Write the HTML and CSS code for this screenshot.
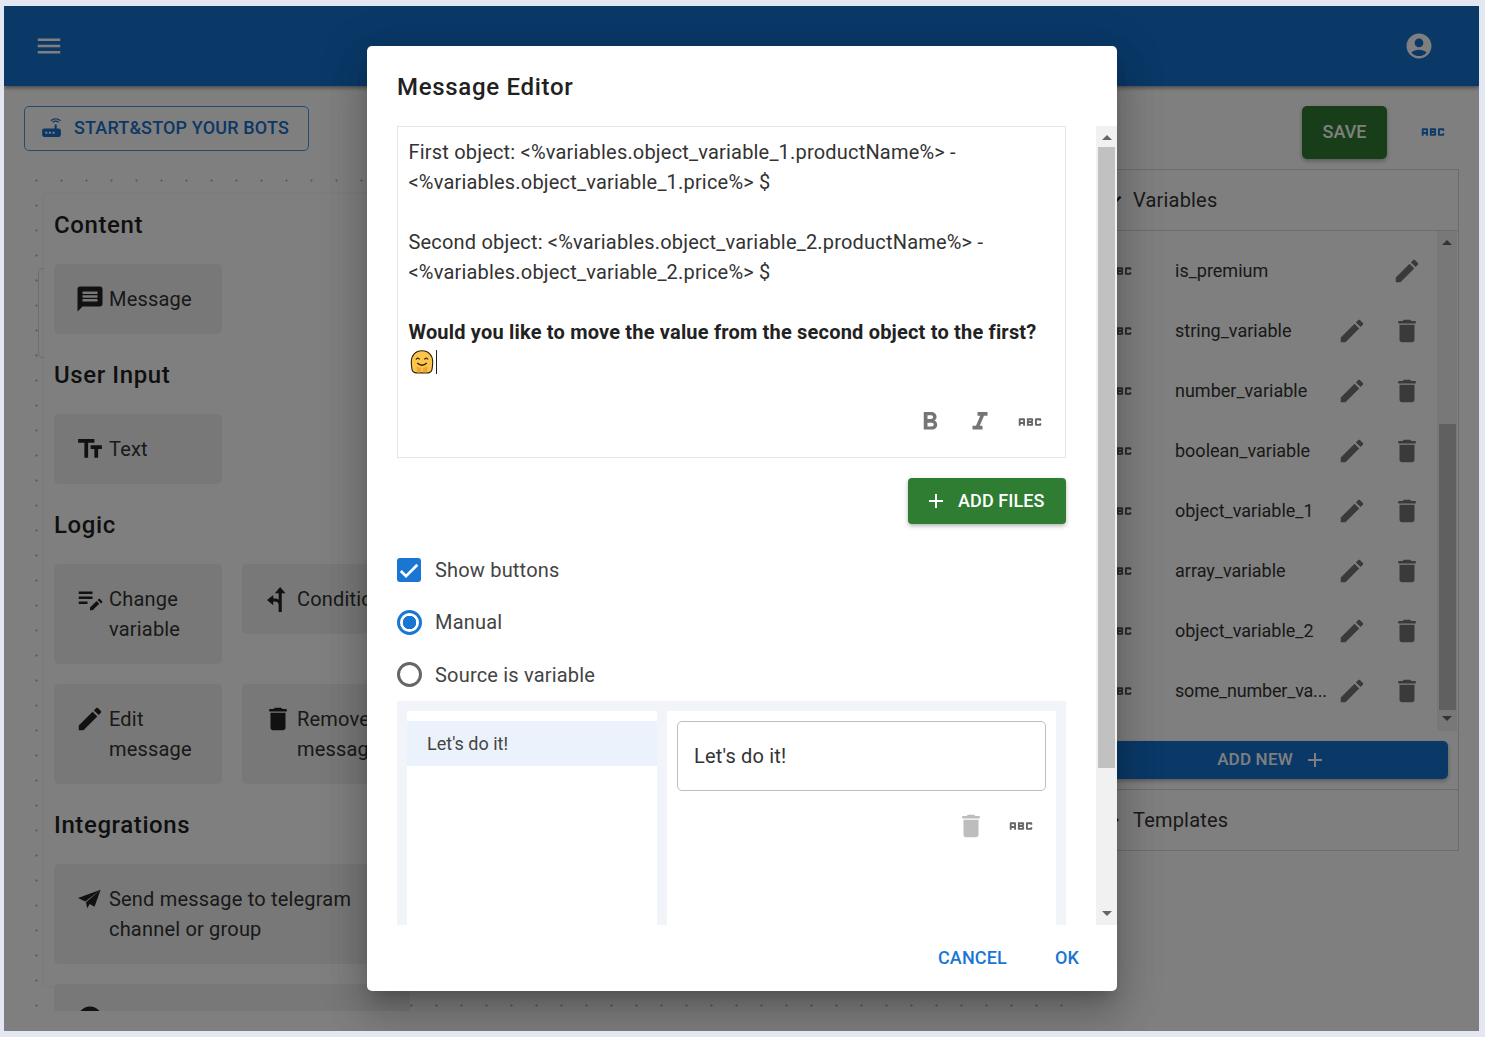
FILE: index.html
```html
<!DOCTYPE html>
<html lang="en">
<head>
    <meta charset="UTF-8">
    <meta name="viewport" content="width=device-width, initial-scale=1.0">
    <title>Message Editor</title>
    <link rel="stylesheet" href="styles.css">
</head>
<body>
    <svg class="sprite" xmlns="http://www.w3.org/2000/svg">
        <symbol id="i-menu" viewBox="0 0 24 24"><path d="M3 18h18v-2H3v2zm0-5h18v-2H3v2zm0-7v2h18V6H3z"/></symbol>
        <symbol id="i-account" viewBox="0 0 24 24"><path d="M12 2C6.48 2 2 6.48 2 12s4.48 10 10 10 10-4.48 10-10S17.52 2 12 2zm0 4c1.93 0 3.5 1.57 3.5 3.5S13.93 13 12 13s-3.5-1.57-3.5-3.5S10.07 6 12 6zm0 14c-2.03 0-4.43-.82-6.14-2.88C7.55 15.8 9.68 15 12 15s4.45.8 6.14 2.12C16.43 19.18 14.03 20 12 20z"/></symbol>
        <symbol id="i-router" viewBox="0 0 24 24"><path d="M20.2 5.9l.8-.8C19.6 3.7 17.8 3 16 3s-3.6.7-5 2.1l.8.8C13 4.8 14.5 4.2 16 4.2s3 .6 4.2 1.7zm-.9.8c-.9-.9-2.1-1.4-3.3-1.4s-2.4.5-3.3 1.4l.8.8c.7-.7 1.6-1 2.5-1 .9 0 1.8.3 2.5 1l.8-.8zM19 13h-2V9h-2v4H5c-1.1 0-2 .9-2 2v4c0 1.1.9 2 2 2h14c1.1 0 2-.9 2-2v-4c0-1.1-.9-2-2-2zM8 18H6v-2h2v2zm3.5 0h-2v-2h2v2zm3.5 0h-2v-2h2v2z"/></symbol>
        <symbol id="i-message" viewBox="0 0 24 24"><path d="M20 2H4c-1.1 0-1.99.9-1.99 2L2 22l4-4h14c1.1 0 2-.9 2-2V4c0-1.1-.9-2-2-2zm-2 12H6v-2h12v2zm0-3H6V9h12v2zm0-3H6V6h12v2z"/></symbol>
        <symbol id="i-text" viewBox="0 0 24 24"><path d="M2.5 4v3h5v12h3V7h5V4h-13zm19 5h-9v3h3v7h3v-7h3V9h-3z"/></symbol>
        <symbol id="i-edit-note" viewBox="0 0 24 24"><path d="M3 10h11v2H3v-2zm0-2h11V6H3v2zm0 8h7v-2H3v2zm15.01-3.13l.71-.71c.39-.39 1.02-.39 1.41 0l1.41 1.41c.39.39.39 1.02 0 1.41l-.71.71-2.82-2.82zm-.71.71l-5.3 5.3V21h2.12l5.3-5.3-2.12-2.12z"/></symbol>
        <symbol id="i-fork" viewBox="0 0 24 24"><path d="M13.7 2.400L18 7.400h-3v15h-2.500V17c0-2-1-3-3-3H8.200v3l-5-4.200 5-4v2.800h1.300c1.200 0 2.200.4 3 1V7.400h-3z"/></symbol>
        <symbol id="i-edit" viewBox="0 0 24 24"><path d="M3 17.25V21h3.75L17.81 9.94l-3.75-3.75L3 17.25zM20.71 7.04c.39-.39.39-1.02 0-1.41l-2.34-2.34c-.39-.39-1.02-.39-1.41 0l-1.83 1.83 3.75 3.75 1.83-1.83z"/></symbol>
        <symbol id="i-delete" viewBox="0 0 24 24"><path d="M6 19c0 1.1.9 2 2 2h8c1.1 0 2-.9 2-2V7H6v12zM19 4h-3.5l-1-1h-5l-1 1H5v2h14V4z"/></symbol>
        <symbol id="i-send" viewBox="0 0 24 24"><path d="M20.500 4.500L2.400 11.200l5.800 2.800zM20.500 4.500L8.800 14.500l.9 4.900 2.100-3.500 3.800 2.200z"/></symbol>
        <symbol id="i-add" viewBox="0 0 24 24"><path d="M19 13h-6v6h-2v-6H5v-2h6V5h2v6h6v2z"/></symbol>
        <symbol id="i-bold" viewBox="0 0 24 24"><path d="M15.6 10.79c.97-.67 1.65-1.77 1.65-2.79 0-2.26-1.75-4-4-4H7v14h7.04c2.09 0 3.71-1.7 3.71-3.79 0-1.52-.86-2.82-2.15-3.42zM10 6.5h3c.83 0 1.5.67 1.5 1.5s-.67 1.5-1.5 1.5h-3v-3zm3.5 9H10v-3h3.5c.83 0 1.5.67 1.5 1.5s-.67 1.5-1.5 1.5z"/></symbol>
        <symbol id="i-italic" viewBox="0 0 24 24"><path d="M10 4v3h2.21l-3.42 8H6v3h8v-3h-2.21l3.42-8H18V4z"/></symbol>
        <symbol id="i-abc" viewBox="0 0 24 24"><path d="M21 11h-1.5v-.5h-2v3h2V13H21v1c0 .55-.45 1-1 1h-3c-.55 0-1-.45-1-1v-4c0-.55.45-1 1-1h3c.55 0 1 .45 1 1v1zM8 10v5H6.5v-1.5h-2V15H3v-5c0-.55.45-1 1-1h3c.55 0 1 .45 1 1zm-1.5.5h-2V12h2v-1.5zm7 1.5c.55 0 1 .45 1 1v1c0 .55-.45 1-1 1h-4V9h4c.55 0 1 .45 1 1v1c0 .55-.45 1-1 1zM11 10.5v.75h2v-.75h-2zm2 2.25h-2v.75h2v-.75z"/></symbol>
        <symbol id="i-chevron" viewBox="0 0 24 24"><path d="M16.59 8.59L12 13.17 7.41 8.59 6 10l6 6 6-6z"/></symbol>
    </svg>

    <div class="app">
        <header class="topbar">
            <svg class="icon"><use href="#i-menu"/></svg>
            <svg class="icon"><use href="#i-account"/></svg>
        </header>

        <main class="main">
            <section class="builder">
                <button class="bots-button" type="button">
                    <svg class="icon"><use href="#i-router"/></svg>
                    <span>START&amp;STOP YOUR BOTS</span>
                </button>
                <div class="canvas">
                    <div class="canvas-node"></div>
                    <div class="palette">
                        <h3 class="palette-title">Content</h3>
                        <div class="palette-cards">
                            <div class="block-card"><svg class="icon"><use href="#i-message"/></svg><span>Message</span></div>
                        </div>
                        <h3 class="palette-title">User Input</h3>
                        <div class="palette-cards">
                            <div class="block-card"><svg class="icon"><use href="#i-text"/></svg><span>Text</span></div>
                        </div>
                        <h3 class="palette-title">Logic</h3>
                        <div class="palette-cards">
                            <div class="block-card"><svg class="icon"><use href="#i-edit-note"/></svg><span>Change<br>variable</span></div>
                            <div class="block-card block-short"><svg class="icon"><use href="#i-fork"/></svg><span>Condition</span></div>
                            <div class="block-card"><svg class="icon"><use href="#i-edit"/></svg><span>Edit<br>message</span></div>
                            <div class="block-card"><svg class="icon"><use href="#i-delete"/></svg><span>Remove<br>message</span></div>
                        </div>
                        <h3 class="palette-title">Integrations</h3>
                        <div class="palette-cards">
                            <div class="block-card block-wide"><svg class="icon"><use href="#i-send"/></svg><span>Send message to telegram<br>channel or group</span></div>
                            <div class="block-card block-wide"><svg class="icon"><use href="#i-account"/></svg></div>
                        </div>
                    </div>
                </div>
            </section>

            <aside class="sidebar">
                <div class="save-row">
                    <button class="save-button" type="button">SAVE</button>
                    <svg class="icon save-abc"><use href="#i-abc"/></svg>
                </div>
                <div class="accordion">
                    <div class="accordion-head">
                        <svg class="icon"><use href="#i-chevron"/></svg>
                        <span>Variables</span>
                    </div>
                    <div class="accordion-body">
                        <div class="variables">
                            <div class="variable-list">
                                <div class="variable-row">
                                    <svg class="icon row-abc"><use href="#i-abc"/></svg>
                                    <span class="variable-name">is_premium</span>
                                    <span class="row-action"></span>
                                    <span class="row-action"><svg class="icon"><use href="#i-edit"/></svg></span>
                                </div>
                                <div class="variable-row">
                                    <svg class="icon row-abc"><use href="#i-abc"/></svg>
                                    <span class="variable-name">string_variable</span>
                                    <span class="row-action"><svg class="icon"><use href="#i-edit"/></svg></span>
                                    <span class="row-action"><svg class="icon"><use href="#i-delete"/></svg></span>
                                </div>
                                <div class="variable-row">
                                    <svg class="icon row-abc"><use href="#i-abc"/></svg>
                                    <span class="variable-name">number_variable</span>
                                    <span class="row-action"><svg class="icon"><use href="#i-edit"/></svg></span>
                                    <span class="row-action"><svg class="icon"><use href="#i-delete"/></svg></span>
                                </div>
                                <div class="variable-row">
                                    <svg class="icon row-abc"><use href="#i-abc"/></svg>
                                    <span class="variable-name">boolean_variable</span>
                                    <span class="row-action"><svg class="icon"><use href="#i-edit"/></svg></span>
                                    <span class="row-action"><svg class="icon"><use href="#i-delete"/></svg></span>
                                </div>
                                <div class="variable-row">
                                    <svg class="icon row-abc"><use href="#i-abc"/></svg>
                                    <span class="variable-name">object_variable_1</span>
                                    <span class="row-action"><svg class="icon"><use href="#i-edit"/></svg></span>
                                    <span class="row-action"><svg class="icon"><use href="#i-delete"/></svg></span>
                                </div>
                                <div class="variable-row">
                                    <svg class="icon row-abc"><use href="#i-abc"/></svg>
                                    <span class="variable-name">array_variable</span>
                                    <span class="row-action"><svg class="icon"><use href="#i-edit"/></svg></span>
                                    <span class="row-action"><svg class="icon"><use href="#i-delete"/></svg></span>
                                </div>
                                <div class="variable-row">
                                    <svg class="icon row-abc"><use href="#i-abc"/></svg>
                                    <span class="variable-name">object_variable_2</span>
                                    <span class="row-action"><svg class="icon"><use href="#i-edit"/></svg></span>
                                    <span class="row-action"><svg class="icon"><use href="#i-delete"/></svg></span>
                                </div>
                                <div class="variable-row">
                                    <svg class="icon row-abc"><use href="#i-abc"/></svg>
                                    <span class="variable-name variable-cut">some_number_va...</span>
                                    <span class="row-action"><svg class="icon"><use href="#i-edit"/></svg></span>
                                    <span class="row-action"><svg class="icon"><use href="#i-delete"/></svg></span>
                                </div>
                            </div>
                            <div class="list-scroll">
                                <span class="arrow-up"></span>
                                <span class="list-thumb"></span>
                                <span class="arrow-down"></span>
                            </div>
                        </div>
                        <button class="add-new" type="button"><span>ADD NEW</span><svg class="icon"><use href="#i-add"/></svg></button>
                    </div>
                    <div class="accordion-head accordion-last">
                        <svg class="icon chevron-right"><use href="#i-chevron"/></svg>
                        <span>Templates</span>
                    </div>
                </div>
            </aside>
        </main>

        <div class="overlay">
            <div class="dialog">
                <h2 class="dialog-title">Message Editor</h2>
                <div class="dialog-body">
                    <div class="dialog-content">
                        <div class="editor">
                            <div class="editor-text">
                                <p>First object: &lt;%variables.object_variable_1.productName%&gt; -</p>
                                <p>&lt;%variables.object_variable_1.price%&gt; $</p>
                                <p>&nbsp;</p>
                                <p>Second object: &lt;%variables.object_variable_2.productName%&gt; -</p>
                                <p>&lt;%variables.object_variable_2.price%&gt; $</p>
                                <p>&nbsp;</p>
                                <p><strong>Would you like to move the value from the second object to the first?</strong></p>
                                <p class="emoji-line">
                                    <svg class="emoji" viewBox="0 0 24 24">
                                        <path d="M12 .8c6.500 0 10.700 4.500 10.700 11 0 2.500-.2 5-.7 7.500-.4 2-2 3.400-4.500 3.600H6.500C4 22.700 2.400 21.300 2 19.300 1.500 16.800 1.300 14.300 1.300 11.800 1.300 5.300 5.500.8 12 .8z" fill="#fcc64e" stroke="#2e2208" stroke-width="1.100"/>
                                        <path d="M6 9.500q1.800-2.600 3.600 0M14.400 9.500q1.800-2.600 3.600 0M7.200 13q4.800 4.400 9.600 0" fill="none" stroke="#2e2208" stroke-width="1.300"/>
                                        <path d="M6.500 16.500l4.500 1.500v4.400H6.800zM17.500 16.500l-4.500 1.500v4.400h4.200z" fill="#f2a531"/>
                                    </svg><span class="caret"></span>
                                </p>
                            </div>
                            <div class="editor-tools">
                                <svg class="icon tool-icon"><use href="#i-bold"/></svg>
                                <svg class="icon tool-icon"><use href="#i-italic"/></svg>
                                <svg class="icon tool-abc"><use href="#i-abc"/></svg>
                            </div>
                        </div>

                        <div class="files-row">
                            <button class="add-files" type="button"><svg class="icon"><use href="#i-add"/></svg><span>ADD FILES</span></button>
                        </div>

                        <div class="option option-first">
                            <span class="checkbox">
                                <svg viewBox="0 0 24 24"><path d="M9 16.2L4.800 12l-1.900 1.900L9 20 21.300 7.700l-1.900-1.900z"/></svg>
                            </span>
                            <span>Show buttons</span>
                        </div>
                        <div class="option"><span class="radio radio-on"></span><span>Manual</span></div>
                        <div class="option"><span class="radio"></span><span>Source is variable</span></div>

                        <div class="button-editor">
                            <div class="button-list">
                                <div class="button-item">Let's do it!</div>
                            </div>
                            <div class="button-detail">
                                <div class="button-input">Let's do it!</div>
                                <div class="detail-tools">
                                    <svg class="icon detail-delete"><use href="#i-delete"/></svg>
                                    <svg class="icon tool-abc"><use href="#i-abc"/></svg>
                                </div>
                            </div>
                        </div>
                    </div>
                    <div class="dialog-scroll">
                        <span class="arrow-up"></span>
                        <span class="dialog-thumb"></span>
                        <span class="arrow-down"></span>
                    </div>
                </div>
                <div class="dialog-actions">
                    <button class="text-button" type="button">CANCEL</button>
                    <button class="text-button" type="button">OK</button>
                </div>
            </div>
        </div>
    </div>
</body>
</html>
```

FILE: styles.css
```css
* {
    margin: 0;
    padding: 0;
    box-sizing: border-box;
    font-family: Roboto, "Liberation Sans", sans-serif;
}

body {
    height: 1037px;
    padding: 6px 6px 6px 4px;
    background: #e3e7f2;
    overflow: hidden;
}

button {
    border: none;
    background: none;
}

.sprite {
    position: absolute;
    width: 0;
    height: 0;
}

.icon {
    display: block;
    flex-shrink: 0;
    width: 30px;
    height: 30px;
    fill: currentColor;
}

.app {
    position: relative;
    height: 1025px;
    background: #fff;
    overflow: hidden;
}

.topbar {
    display: flex;
    justify-content: space-between;
    align-items: center;
    height: 80px;
    padding: 0 45px 0 30px;
    background: #1472d0;
    color: #fff;
    box-shadow: 0 2px 4px rgba(0, 0, 0, 0.4);
}

.main {
    display: flex;
    height: 945px;
    padding: 20px 20px 0;
}

/* left part */
.builder {
    display: flex;
    flex-direction: column;
    align-items: flex-start;
    width: 1057px;
    height: 905px;
    overflow: hidden;
}

.bots-button {
    display: flex;
    align-items: center;
    gap: 10px;
    width: 285px;
    height: 45px;
    padding: 0 0 2px 14px;
    flex-shrink: 0;
    border: 1px solid #4f94da;
    border-radius: 5px;
    color: #1a6fc9;
    font-size: 18px;
    font-weight: 500;
    letter-spacing: 0.15px;
    white-space: nowrap;
}

.bots-button .icon {
    width: 25px;
    height: 25px;
}

.canvas {
    position: relative;
    flex: 1;
    width: 100%;
    margin-top: 19px;
    padding: 24px 0 0 20px;
    background-color: #fff;
    background-image: url("data:image/svg+xml,%3Csvg xmlns='http://www.w3.org/2000/svg' width='25' height='25'%3E%3Cpath d='M11 10h3v1h-3zM12 9h1v3h-1z' fill='%23c4c4c4'/%3E%3C/svg%3E");
    background-size: 25px 25px;
    overflow: hidden;
}

.canvas-node {
    position: absolute;
    left: 14px;
    top: 98px;
    width: 40px;
    height: 90px;
    border: 1px solid #ddd;
    border-radius: 4px;
}

.palette {
    position: relative;
    width: 700px;
    height: 792px;
    padding: 10px;
    background: #fff;
    box-shadow: 0 0 3px rgba(0, 0, 0, 0.1);
}

.palette-title {
    height: 42px;
    margin-bottom: 18px;
    color: #1f1f1f;
    font-size: 24px;
    font-weight: 500;
    line-height: 42px;
    letter-spacing: 0.6px;
}

.palette-cards {
    display: flex;
    flex-wrap: wrap;
    align-items: flex-start;
    gap: 20px;
    width: 376px;
    margin-bottom: 20px;
}

.block-card {
    display: flex;
    gap: 4px;
    width: 168px;
    padding: 20px 0 20px 21px;
    border-radius: 5px;
    background: #f0f0f0;
    color: #333;
    font-size: 20px;
    line-height: 30px;
    letter-spacing: 0.19px;
}

.block-card .icon {
    color: #222;
}

.block-short {
    height: 70px;
}

.block-wide {
    width: 356px;
    white-space: nowrap;
}

/* right part */
.sidebar {
    width: 378px;
}

.save-row {
    display: flex;
    align-items: center;
    gap: 31px;
    height: 53px;
    padding-left: 221px;
    margin-bottom: 10px;
}

.save-button {
    width: 85px;
    height: 53px;
    padding-bottom: 2px;
    border-radius: 5px;
    background: #2e7d32;
    color: #fff;
    font-size: 18px;
    font-weight: 500;
    box-shadow: 0 2px 4px rgba(0, 0, 0, 0.3);
}

.save-abc {
    margin-bottom: 1px;
    color: #1976d2;
}

.accordion {
    border: 1px solid #d9d9d9;
}

.accordion-head {
    display: flex;
    align-items: center;
    gap: 4px;
    height: 61px;
    padding-left: 17px;
    border-bottom: 1px solid #d9d9d9;
    color: #333;
    font-size: 20px;
    letter-spacing: 0.19px;
}

.accordion-last {
    height: 60px;
    border-bottom: none;
}

.chevron-right {
    transform: rotate(-90deg);
}

.accordion-body {
    padding: 0 0 10px;
    border-bottom: 1px solid #d9d9d9;
}

.variables {
    display: flex;
    height: 500px;
}

.variable-list {
    width: 355px;
    padding-top: 10px;
}

.variable-row {
    display: flex;
    align-items: center;
    height: 60px;
    padding-left: 23px;
    color: #333;
    font-size: 18px;
}

.row-abc {
    margin-right: 40px;
    color: #555;
}

.variable-name {
    width: 155px;
    margin: 0 -5.500px 2px 0;
    white-space: nowrap;
}

.variable-cut {
    letter-spacing: -0.2px;
}

.row-action {
    display: flex;
    justify-content: center;
    width: 55px;
    color: #757575;
}

.list-scroll {
    display: flex;
    flex-direction: column;
    align-items: center;
    width: 20px;
    background: #f1f1f1;
}

.list-thumb {
    width: 17px;
    height: 286px;
    margin-top: 179px;
    background: #c1c1c1;
}

.list-scroll .arrow-up {
    margin-top: 9px;
}

.list-scroll .arrow-down {
    margin-top: 6px;
}

.arrow-up,
.arrow-down {
    width: 0;
    height: 0;
    border-left: 5px solid transparent;
    border-right: 5px solid transparent;
}

.arrow-up {
    border-bottom: 5px solid #666;
}

.arrow-down {
    border-top: 5px solid #666;
}

.add-new {
    display: flex;
    justify-content: center;
    align-items: center;
    gap: 10px;
    width: 356px;
    height: 38px;
    margin: 10px 0 0 10px;
    padding-left: 4px;
    border-radius: 5px;
    background: #1472d0;
    color: #fff;
    font-size: 17px;
    font-weight: 500;
    letter-spacing: 0.2px;
    box-shadow: 0 2px 4px rgba(0, 0, 0, 0.3);
}

.add-new span {
    margin-bottom: 2px;
}

.add-new .icon {
    width: 24px;
    height: 24px;
}

/* dialog */
.overlay {
    position: absolute;
    inset: 0;
    padding: 40px 0 0 363px;
    background: rgba(0, 0, 0, 0.5);
}

.dialog {
    display: flex;
    flex-direction: column;
    width: 750px;
    height: 945px;
    border-radius: 5px;
    background: #fff;
    box-shadow: 0 11px 15px -7px rgba(0, 0, 0, 0.2), 0 24px 38px 3px rgba(0, 0, 0, 0.14), 0 9px 46px 8px rgba(0, 0, 0, 0.12);
    overflow: hidden;
}

.dialog-title {
    height: 80px;
    padding: 25px 30px 0;
    color: #212121;
    font-size: 24px;
    font-weight: 500;
    line-height: 33px;
    letter-spacing: 0.7px;
}

.dialog-body {
    display: flex;
    flex: 1;
    min-height: 0;
}

.dialog-content {
    width: 729px;
    padding: 0 30px;
    overflow: hidden;
}

.dialog-scroll {
    display: flex;
    flex-direction: column;
    align-items: center;
    width: 21px;
    background: #f1f1f1;
}

.dialog-scroll .arrow-up {
    margin-top: 9px;
}

.dialog-thumb {
    width: 17px;
    height: 621px;
    margin-top: 7px;
    background: #c1c1c1;
}

.dialog-scroll .arrow-down {
    margin-top: 143px;
}

.editor {
    height: 332px;
    border: 1px solid #e5e5e5;
}

.editor-text {
    height: 260px;
    padding: 10px 10px 0 10.500px;
    color: #333;
    font-size: 20px;
    line-height: 30px;
    letter-spacing: 0.19px;
    white-space: nowrap;
}

.editor-text strong {
    color: #222;
    font-weight: 700;
}

.emoji-line {
    display: flex;
    align-items: center;
    height: 30px;
    padding-left: 1.500px;
}

.emoji {
    width: 24px;
    height: 24px;
}

.caret {
    width: 1px;
    height: 24px;
    margin-left: 2px;
    background: #222;
}

.editor-tools {
    display: flex;
    justify-content: flex-end;
    gap: 20px;
    padding: 20px 20px 0 0;
}

.tool-icon {
    color: #757575;
}

.tool-abc {
    color: #666;
}

.files-row {
    display: flex;
    justify-content: flex-end;
    margin-top: 20px;
}

.add-files {
    display: flex;
    align-items: center;
    gap: 10px;
    width: 158px;
    height: 46px;
    padding-left: 16px;
    border-radius: 4px;
    background: #2e7d32;
    color: #fff;
    font-size: 18px;
    font-weight: 500;
    letter-spacing: 0.1px;
    box-shadow: 0 2px 4px rgba(0, 0, 0, 0.3);
}

.add-files span {
    margin-bottom: 2px;
}

.add-files .icon {
    width: 24px;
    height: 24px;
}

.option {
    display: flex;
    align-items: center;
    gap: 13px;
    height: 52.500px;
    color: #444;
    font-size: 20px;
    letter-spacing: 0.19px;
}

.option-first {
    gap: 14px;
    margin-top: 20px;
    height: 52px;
}

.checkbox {
    display: block;
    width: 24px;
    height: 24px;
    border-radius: 3px;
    background: #1976d2;
    fill: #fff;
}

.checkbox svg {
    display: block;
    width: 24px;
    height: 24px;
}

.radio {
    width: 25px;
    height: 25px;
    border: 3px solid #666;
    border-radius: 50%;
}

.radio-on {
    border-color: #1976d2;
    background: radial-gradient(circle, #1976d2 6.500px, #fff 7px);
}

.button-editor {
    display: flex;
    gap: 10px;
    height: 300px;
    padding: 10px 10px 0;
    background: #f1f5f9;
}

.button-list {
    width: 250px;
    padding-top: 10px;
    background: #fff;
}

.button-item {
    height: 45px;
    padding-left: 20px;
    background: #ebf2fb;
    color: #444;
    font-size: 18px;
    line-height: 45px;
}

.button-detail {
    flex: 1;
    padding: 10px;
    background: #fff;
}

.button-input {
    height: 70px;
    padding-left: 16px;
    border: 1px solid #bdbdbd;
    border-radius: 5px;
    color: #333;
    font-size: 20px;
    line-height: 68px;
    letter-spacing: 0.19px;
}

.detail-tools {
    display: flex;
    justify-content: flex-end;
    gap: 20px;
    padding: 20px 10px 0 0;
}

.detail-delete {
    color: #bdbdbd;
}

.dialog-actions {
    display: flex;
    justify-content: flex-end;
    align-items: center;
    gap: 48px;
    height: 66px;
    padding: 0 38px 2px 0;
}

.text-button {
    color: #1976d2;
    font-size: 18px;
    font-weight: 500;
    letter-spacing: 0.15px;
}
```
